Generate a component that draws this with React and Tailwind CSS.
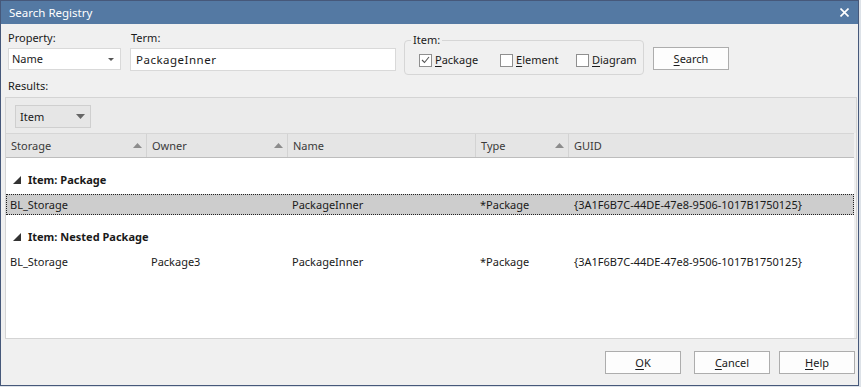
import React from 'react';

const font = { fontFamily: '"Noto Sans", "Liberation Sans", sans-serif' };

const SortUp = () => (
  <svg width="9" height="5" viewBox="0 0 9 5" className="shrink-0">
    <polygon points="4.5,0 9,5 0,5" fill="#8c8c8c" />
  </svg>
);

const Collapse = () => (
  <svg width="8" height="8" viewBox="0 0 8 8" className="shrink-0">
    <polygon points="8,0 8,8 0,8" fill="#333" />
  </svg>
);

const Check = ({ checked, label, hot, rest, width }) => (
  <div className="flex items-center h-[16px] shrink-0" style={{ width }}>
    <div className="w-[13px] h-[13px] shrink-0 border border-[#8f8f8f] bg-white flex items-center justify-center">
      {checked && (
        <svg width="9" height="8" viewBox="0 0 9 8">
          <polyline points="1,4 3.5,6.5 8,1" fill="none" stroke="#555" strokeWidth="1.1" />
        </svg>
      )}
    </div>
    <span className="ml-[3px] whitespace-nowrap">
      <span className="underline underline-offset-2">{hot}</span>{rest}
    </span>
  </div>
);

const Button = ({ hot, rest, className = '' }) => (
  <button className={`w-[76px] h-[23px] border border-[#adadad] bg-[#fdfdfd] text-[11px] text-[#1a1a1a] ${className}`}>
    <span className="underline underline-offset-2">{hot}</span>{rest}
  </button>
);

const cols = [
  { name: 'Storage', w: 'w-[141px]', sort: true },
  { name: 'Owner', w: 'w-[141px]', sort: true },
  { name: 'Name', w: 'w-[188px]' },
  { name: 'Type', w: 'w-[93px]', sort: true },
  { name: 'GUID', w: 'flex-1' },
];

const guid = '{3A1F6B7C-44DE-47e8-9506-1017B1750125}';

const groups = [
  { title: 'Item: Package', rows: [['BL_Storage', '', 'PackageInner', '*Package', guid]], selected: true },
  { title: 'Item: Nested Package', rows: [['BL_Storage', 'Package3', 'PackageInner', '*Package', guid]] },
];

const Row = ({ cells, selected }) => (
  <div className={`flex h-[21px] items-center ${selected ? 'bg-[#cdcdcd] border border-dotted border-[#222]' : 'border border-transparent'}`}>
    {cells.map((c, i) => (
      <div key={i} className={`${cols[i].w} ${i === 4 ? 'pl-[4px]' : 'pl-[3px]'} truncate`}>{c}</div>
    ))}
  </div>
);

export default function App() {
  return (
    <div className="w-[861px] h-[387px] bg-[#dde2e8] overflow-hidden text-[11px] leading-[16px] text-[#1a1a1a]" style={font}>
      <div className="w-[859px] h-[386px] border border-[#46587a] bg-[#f0f0f0] flex flex-col">
        {/* title bar */}
        <div className="h-[23px] bg-[#5479a3] flex items-center justify-between pl-[8px] pr-[9px] text-white">
          <span className="text-[11.5px]">Search Registry</span>
          <svg width="9" height="9" viewBox="0 0 9 9">
            <path d="M0.5 0.5 L8.5 8.5 M8.5 0.5 L0.5 8.5" stroke="#fff" strokeWidth="1.6" />
          </svg>
        </div>

        {/* search controls */}
        <div className="h-[54px] flex items-start pl-[7px] pt-[6px]">
          <div className="w-[113px]">
            <div>Property:</div>
            <div className="mt-[2px] h-[22px] bg-white border border-[#d9d9d9] flex items-center justify-between pl-[3px] pr-[6px]">
              <span>Name</span>
              <svg width="6" height="3" viewBox="0 0 6 3">
                <polygon points="0,0 6,0 3,3" fill="#555" />
              </svg>
            </div>
          </div>
          <div className="w-[266px] ml-[9px]">
            <div className="pl-[1px]">Term:</div>
            <div className="mt-[2px] h-[23px] bg-white border border-[#d9d9d9] flex items-center pl-[5px] text-[11.5px] tracking-[0.5px]">
              PackageInner
            </div>
          </div>
          <fieldset className="ml-[8px] mt-[2px] w-[240px] h-[43px] border border-[#d6d6d6] rounded-[4px]">
            <legend className="ml-[6px] px-[2px]">Item:</legend>
            <div className="flex items-center pl-[14px] pt-[4px]">
              <Check checked hot="P" rest="ackage" width="81px" />
              <Check hot="E" rest="lement" width="76px" />
              <Check hot="D" rest="iagram" width="60px" />
            </div>
          </fieldset>
          <Button hot="S" rest="earch" className="ml-[9px] mt-[17px]" />
        </div>

        <div className="pl-[7px]">Results:</div>

        {/* results panel */}
        <div className="ml-[4px] mt-[3px] w-[852px] h-[242px] border border-[#d4d4d4] flex flex-col">
          <div className="h-[35px] bg-[#ebebeb] pl-[9px] pt-[7px]">
            <div className="w-[76px] h-[23px] bg-[#e6e6e6] border border-[#cfcfcf] flex items-center justify-between pl-[4px] pr-[5px]">
              <span>Item</span>
              <svg width="9" height="5" viewBox="0 0 9 5">
                <polygon points="0,0 9,0 4.5,5" fill="#666" />
              </svg>
            </div>
          </div>
          <div className="flex h-[25px] bg-[#e5e5e5] border-t border-b border-t-[#d6d6d6] border-b-[#bdbdbd] text-[#3a3a3a] mr-[2px]">
            {cols.map((c, i) => (
              <div key={c.name} className={`${c.w} flex items-center justify-between pl-[5px] pr-[4px] ${i < 4 ? 'border-r border-[#d3d3d3]' : ''}`}>
                <span>{c.name}</span>
                {c.sort && <SortUp />}
              </div>
            ))}
          </div>
          <div className="flex-1 bg-white mr-[2px]">
            {groups.map(g => (
              <div key={g.title}>
                <div className="h-[36px] flex items-end pb-[6px] pl-[7px] font-bold">
                  <div className="flex items-center">
                    <Collapse />
                    <span className="ml-[7px]">{g.title}</span>
                  </div>
                </div>
                {g.rows.map((r, i) => <Row key={i} cells={r} selected={g.selected} />)}
              </div>
            ))}
          </div>
        </div>

        {/* dialog buttons */}
        <div className="flex mt-[12px] pl-[604px]">
          <Button hot="O" rest="K" />
          <Button hot="C" rest="ancel" className="ml-[13px]" />
          <Button hot="H" rest="elp" className="ml-[9px]" />
        </div>
      </div>
    </div>
  );
}
